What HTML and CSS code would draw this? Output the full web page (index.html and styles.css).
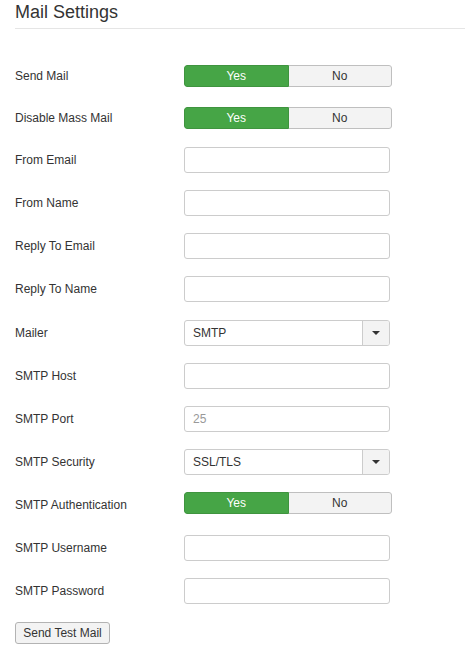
FILE: index.html
```html
<!DOCTYPE html>
<html>
<head>
<meta charset="utf-8">
<link rel="stylesheet" href="styles.css">
</head>
<body>
<div class="page">
  <h2 class="title">Mail Settings</h2>
  <div class="form">
    <div class="row row-toggle">
      <div class="label">Send Mail</div>
      <div class="toggle"><span class="seg yes">Yes</span><span class="seg no">No</span></div>
    </div>
    <div class="row row-toggle">
      <div class="label">Disable Mass Mail</div>
      <div class="toggle"><span class="seg yes">Yes</span><span class="seg no">No</span></div>
    </div>
    <div class="row">
      <div class="label">From Email</div>
      <div class="input"></div>
    </div>
    <div class="row">
      <div class="label">From Name</div>
      <div class="input"></div>
    </div>
    <div class="row">
      <div class="label">Reply To Email</div>
      <div class="input"></div>
    </div>
    <div class="row">
      <div class="label">Reply To Name</div>
      <div class="input"></div>
    </div>
    <div class="row">
      <div class="label">Mailer</div>
      <div class="select"><span class="select-value">SMTP</span><span class="select-btn"><span class="caret"></span></span></div>
    </div>
    <div class="row">
      <div class="label">SMTP Host</div>
      <div class="input"></div>
    </div>
    <div class="row">
      <div class="label">SMTP Port</div>
      <div class="input"><span class="placeholder">25</span></div>
    </div>
    <div class="row">
      <div class="label">SMTP Security</div>
      <div class="select"><span class="select-value">SSL/TLS</span><span class="select-btn"><span class="caret"></span></span></div>
    </div>
    <div class="row">
      <div class="label">SMTP Authentication</div>
      <div class="toggle toggle-top"><span class="seg yes">Yes</span><span class="seg no">No</span></div>
    </div>
    <div class="row">
      <div class="label">SMTP Username</div>
      <div class="input"></div>
    </div>
    <div class="row">
      <div class="label">SMTP Password</div>
      <div class="input"></div>
    </div>
  </div>
  <button class="btn">Send Test Mail</button>
</div>
</body>
</html>
```

FILE: styles.css
```css
html, body {
  margin: 0;
  padding: 0;
  background: #fff;
}
body {
  font-family: "Liberation Sans", Arial, sans-serif;
  font-size: 12px;
  color: #333;
}
.page {
  padding-left: 15px;
}
.title {
  margin: 0;
  font-size: 18px;
  font-weight: normal;
  line-height: 24px;
  padding-bottom: 4px;
  border-bottom: 1px solid #e5e5e5;
  color: #333;
}
.form {
  display: flex;
  flex-direction: column;
  gap: 17.1px;
  margin-top: 34px;
}
.row {
  display: flex;
  align-items: center;
  height: 26px;
}
.row-toggle {
  height: 25px;
}
.label {
  width: 169px;
  flex: none;
}
.toggle {
  display: flex;
  width: 208px;
  height: 22px;
  box-sizing: border-box;
  border-radius: 3px;
  overflow: hidden;
}
.toggle-top {
  align-self: flex-start;
}
.seg {
  flex: 1;
  display: flex;
  align-items: center;
  justify-content: center;
  box-sizing: border-box;
}
.yes {
  background: #46a546;
  color: #fff;
  border: 1px solid #3f943f;
  border-radius: 3px 0 0 3px;
}
.no {
  background: #f3f3f3;
  color: #333;
  border: 1px solid #bfbfbf;
  border-left: none;
  border-radius: 0 3px 3px 0;
}
.input, .select {
  width: 206px;
  height: 26px;
  box-sizing: border-box;
  border: 1px solid #ccc;
  border-radius: 3px;
  display: flex;
  align-items: center;
  background: #fff;
}
.input {
  padding-left: 8px;
}
.placeholder {
  color: #999;
}
.select-value {
  flex: 1;
  padding-left: 8px;
}
.select-btn {
  width: 26px;
  height: 100%;
  background: #f3f3f3;
  border-left: 1px solid #ccc;
  border-radius: 0 2px 2px 0;
  display: flex;
  align-items: center;
  justify-content: center;
}
.caret {
  width: 0;
  height: 0;
  border-left: 4px solid transparent;
  border-right: 4px solid transparent;
  border-top: 4px solid #333;
}
.btn {
  margin-top: 18px;
  display: block;
  height: 22px;
  width: 95px;
  padding: 0;
  font-family: "Liberation Sans", Arial, sans-serif;
  font-size: 12px;
  color: #333;
  background: #f3f3f3;
  border: 1px solid #b3b3b3;
  border-radius: 3px;
}
```
